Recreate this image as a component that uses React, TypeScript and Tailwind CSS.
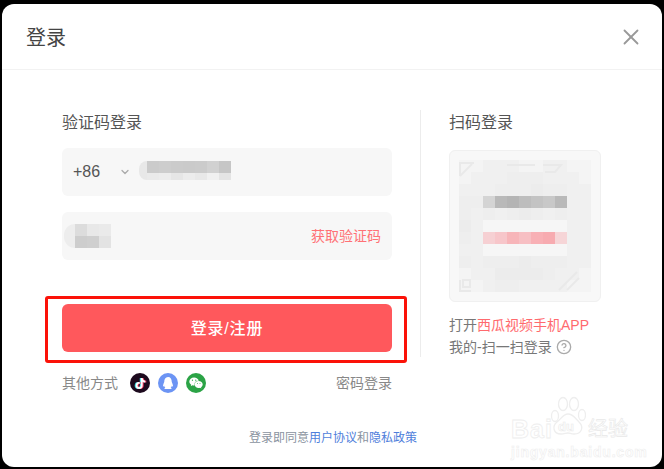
import { ChevronDown, CircleHelp, X } from 'lucide-react'
import { FaQq, FaTiktok, FaWeixin } from 'react-icons/fa'

const tones: Record<string, string> = {
  a: 'bg-[#f4f4f4]',
  b: 'bg-[#f0f0f0]',
  c: 'bg-[#eeeeee]',
  d: 'bg-[#ececec]',
  w: 'bg-[#f6f6f6]',
  e: 'bg-[#d4d4d4]',
  f: 'bg-[#b9b9b9]',
  g: 'bg-[#b4b4b4]',
  h: 'bg-[#bdbdbd]',
  i: 'bg-[#c3c3c3]',
  j: 'bg-[#c8c8c8]',
  k: 'bg-[#f6d0d3]',
  l: 'bg-[#f7c6ca]',
  m: 'bg-[#f7b5b9]',
  n: 'bg-[#f7bfc3]',
  o: 'bg-[#f8b0b5]',
  p: 'bg-[#f7abb0]',
  q: 'bg-[#f6d5d7]',
}

const qrRows = [
  'aabbbaabbaa',
  'abbbcccbbba',
  'bbbcccdccbb',
  'ccefghijfbb',
  'cbcbcdcbcbb',
  'dbwwwwwwwbb',
  'cbklmnopqbb',
  'bbwwwwwwwbb',
  'cbcccdcccbb',
  'abbddddcbba',
  'aabccbbbbaa',
]

const phoneRows = [
  ['bg-[#cbcbcb]', 'bg-[#cdcdcd]', 'bg-[#cbcbcb]', 'bg-[#cacaca]', 'bg-[#cbcbcb]', 'bg-[#d1d1d1]', 'bg-[#c6c6c6]'],
  ['bg-[#eaeaea]', 'bg-[#ececec]', 'bg-[#e6e6e6]', 'bg-[#ececec]', 'bg-[#e8e8e8]', 'bg-[#f0f0f0]', 'bg-[#e4e4e4]'],
]

const codeRows = [
  ['bg-[#dcdcdc]', 'bg-[#e8e8e8]', 'bg-[#eaeaea]'],
  ['bg-[#cdcdcd]', 'bg-[#cfcfcf]', 'bg-[#e3e3e3]'],
]

export default function App() {
  return (
    <div className="h-[469px] w-[664px] overflow-hidden bg-black pb-0.5 pl-0.5 pr-0.5 pt-1 font-['Liberation_Sans','Noto_Sans_CJK_SC',sans-serif]">
      <div className="relative h-full rounded-[12px] bg-white">
        <header className="flex h-[66px] items-center justify-between border-b border-[#f2f2f2] pl-6 pr-[18px]">
          <h1 className="mt-[3px] text-[20px] font-normal text-[#444]">登录</h1>
          <X className="h-[26px] w-[26px] text-[#999]" strokeWidth={1.7} />
        </header>

        <div className="flex pl-[60px] pt-10">
          <section className="w-[330px]">
            <h2 className="text-[16px] leading-[26px] text-[#555]">验证码登录</h2>

            <div className="mt-3 flex h-12 items-center rounded-md bg-[#f7f7f7] pl-[11px] text-[#555]">
              <span className="w-[46px] text-[16px]">+86</span>
              <ChevronDown className="h-3 w-3 text-[#aaa]" strokeWidth={2.5} />
              <div className="ml-2 flex -translate-y-[2px] items-stretch">
                <div className="h-[19px] w-2 rounded-l-[9px] bg-[#e8e8e8]" />
                <div>
                  {phoneRows.map((row, y) => (
                    <div key={y} className={y === 0 ? 'flex h-3' : 'flex h-[7px]'}>
                      {row.map((tone, x) => (
                        <div key={x} className={`w-3 ${tone}`} />
                      ))}
                    </div>
                  ))}
                </div>
              </div>
            </div>

            <div className="mt-4 flex h-12 items-center justify-between rounded-md bg-[#f7f7f7] pl-0.5 pr-[11px]">
              <div className="flex items-stretch">
                <div className="h-6 w-[11px] rounded-l-xl bg-[#ededed]" />
                <div>
                  {codeRows.map((row, y) => (
                    <div key={y} className="flex h-3">
                      {row.map((tone, x) => (
                        <div key={x} className={`w-3 ${tone}`} />
                      ))}
                    </div>
                  ))}
                </div>
              </div>
              <span className="text-[14px] text-[#ff7175]">获取验证码</span>
            </div>

            <div className="relative mt-11">
              <button className="h-12 w-full rounded-md bg-[#ff585c] pt-px text-[16px] font-medium tracking-[0.8px] text-white">登录/注册</button>
              <span className="absolute -bottom-[11px] -left-[17px] -right-[15px] -top-2 rounded-[3px] border-[3px] border-[#fb1208]" />
            </div>

            <div className="mt-[21px] flex h-5 items-center justify-between text-[14px] text-[#888]">
              <div className="flex items-center">
                <span className="w-[68px]">其他方式</span>
                <span className="flex h-5 w-5 items-center justify-center rounded-full bg-[#1d0a1e]">
                  <span className="relative h-[11px] w-[11px]">
                    <FaTiktok className="absolute -left-px top-0 h-[11px] w-[11px] text-[#39dbe3]" />
                    <FaTiktok className="absolute left-px top-0 h-[11px] w-[11px] text-[#f0345c]" />
                    <FaTiktok className="absolute left-0 top-0 h-[11px] w-[11px] text-white" />
                  </span>
                </span>
                <span className="ml-2 flex h-5 w-5 items-center justify-center rounded-full bg-[#6c94f4]">
                  <FaQq className="h-3 w-3 text-white" />
                </span>
                <span className="ml-2 flex h-5 w-5 items-center justify-center rounded-full bg-[#2ba346]">
                  <FaWeixin className="h-[14px] w-[14px] text-white" />
                </span>
              </div>
              <span>密码登录</span>
            </div>
          </section>

          <div className="ml-7 h-[247px] w-px bg-[#ececec]" />

          <section className="ml-7 w-[170px]">
            <h2 className="text-[16px] leading-[26px] text-[#555]">扫码登录</h2>

            <div className="relative mt-3.5 grid h-[152px] w-[152px] grid-cols-[repeat(11,12px)] grid-rows-[repeat(11,12px)] rounded-md border border-[#f0f0f0] bg-[#f8f8f8] p-[9px]">
              {qrRows.join('').split('').map((tone, i) => (
                <div key={i} className={tones[tone]} />
              ))}
              <svg className="absolute left-[9px] top-[11px] h-[130px] w-[132px]" viewBox="0 0 132 130" fill="none" stroke="#e9e9e9" strokeWidth="2">
                <path d="M1 14V1h14M1 14l12-12" />
                <path d="M1 118v11h11M4 118h7v7H4z" />
                <path d="M48 3h28M84 3h18l-6 7h-10" />
                <path d="M100 128l18-18M108 128l12-12" />
              </svg>
            </div>

            <p className="mt-3 whitespace-nowrap text-[14px] leading-[22px] text-[#777]">
              打开<span className="text-[#ff6a6e]">西瓜视频手机APP</span>
            </p>
            <p className="flex items-center whitespace-nowrap text-[14px] leading-[22px] text-[#777]">
              我的-扫一扫登录
              <CircleHelp className="ml-1 h-4 w-4 text-[#aaa]" strokeWidth={2} />
            </p>
          </section>
        </div>

        <p className="mt-[35px] pl-0.5 text-center text-[12px] leading-5 text-[#8a93a0]">
          登录即同意<span className="text-[#4f7edb]">用户协议</span>和<span className="text-[#4f7edb]">隐私政策</span>
        </p>

        <div className="absolute left-[507px] top-[392px] h-[64px] w-[124px] select-none text-white">
          <svg className="absolute left-[41px] top-0 h-[40px] w-[36px]" viewBox="0 0 36 40" fill="white" stroke="#eeeeee" strokeWidth="1.3">
            <ellipse cx="5" cy="20" rx="3.5" ry="5.5" />
            <ellipse cx="13" cy="8" rx="4.5" ry="6.5" />
            <ellipse cx="24" cy="8" rx="4.5" ry="6.5" />
            <ellipse cx="32" cy="19" rx="3.5" ry="5.5" />
            <path d="M18 18c5 0 7 4 11 8 5 5 3 12-5 12-3 0-4-1-6-1s-4 1-7 1c-8 0-9-8-4-12 4-3 6-8 11-8z" />
          </svg>
          <span className="absolute left-[2px] top-[18px] text-[25px] font-bold leading-[30px] tracking-[1px] [-webkit-text-stroke:0.8px_#eeeeee]">Bai</span>
          <span className="absolute left-[49px] top-[24px] text-[13px] font-bold leading-[14px] [-webkit-text-stroke:0.6px_#eaeaea]">du</span>
          <span className="absolute left-[79px] top-[19px] text-[20px] leading-[28px] [-webkit-text-stroke:0.6px_#e8e8e8]">经验</span>
          <span className="absolute left-[2px] top-[48px] text-[14px] font-bold leading-4 tracking-[0.8px] [-webkit-text-stroke:0.6px_#eeeeee]">jingyan.baidu.com</span>
        </div>
      </div>
    </div>
  )
}
